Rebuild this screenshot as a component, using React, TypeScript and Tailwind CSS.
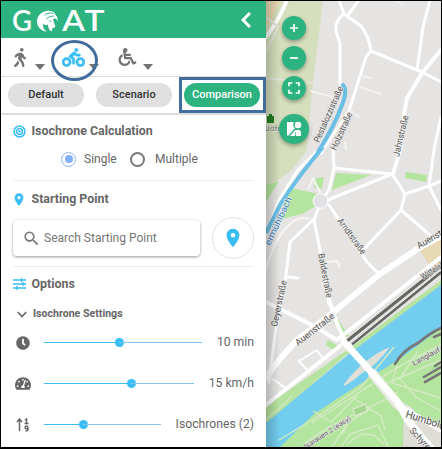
import React from "react";
import { FaBiking, FaWalking, FaWheelchair, FaClock, FaTachometerAlt } from "react-icons/fa";
import { MdPlace, MdSearch, MdFullscreen } from "react-icons/md";

function Road({ d, w = 3, c = "#fff" }: { d: string; w?: number; c?: string }) {
  return <path d={d} fill="none" stroke={c} strokeWidth={w} strokeLinejoin="round" strokeLinecap="round" />;
}

function Label({ x, y, r, len, children, size = 9, fill = "#555" }: {
  x: number; y: number; r: number; len: number; children: string; size?: number; fill?: string;
}) {
  return (
    <text transform={`translate(${x} ${y}) rotate(${r})`} textLength={len} lengthAdjust="spacingAndGlyphs"
      fontSize={size} fill={fill} stroke="#f0f0ee" strokeWidth="1" strokeLinejoin="round" paintOrder="stroke">
      {children}
    </text>
  );
}

function CityMap() {
  return (
    <svg className="block h-full w-full" viewBox="266 1 175 446" preserveAspectRatio="none">
      <defs>
        <linearGradient id="shade" x1="0" x2="1">
          <stop offset="0" stopColor="#000" stopOpacity=".2" />
          <stop offset="1" stopColor="#000" stopOpacity="0" />
        </linearGradient>
      </defs>
      <rect x="266" y="0" width="176" height="449" fill="#e5e4e2" />
      <path d="M266 0H323L312 92L307 150L292 170L266 188Z" fill="#d5dfbd" />
      <path d="M266 0H281L266 29Z" fill="#ead8b4" />
      <path d="M266 185L279 181L266 202ZM287 187L318 194V205L302 214L281 219Z" fill="#b4e59f" />
      <path d="M316 178L324 177L322 189L314 187ZM336 173L371 175L332 190ZM406 172L427 175L426 182L405 178Z" fill="#b4e59f" />
      <path d="M441 236L418 248L430 266H441Z" fill="#e7d9b3" />
      <path d="M266 406L350 348L441 280V298L345 356L266 424Z" fill="#b7e3a0" />
      <path d="M441 326L405 354L342 391L306 413L272 449H441Z" fill="#b4e59f" />
      <path d="M266 423L350 353L441 285V328L401 358L338 398L314 414L278 449H266Z" fill="#72cdee" />
      <path d="M337 318L349 336L344 337L333 321ZM328 340L340 347L334 350L326 345Z" fill="#b4e59f" />
      <path d="M344 384Q365 357 390 347Q377 365 361 374Q352 382 344 386Z" fill="#dedfd7" />

      <Road w={4} d="M287 0Q279 20 266 37" />
      <Road w={2} c="#e3e5d9" d="M266 17L278 27L266 52M266 78L312 83" />
      <Road w={3} d="M339 0L344 14Q335 20 336 31L340 44V84" />
      <Road w={3} d="M344 14L361 26Q369 36 371 51L422 72L441 82" />
      <Road w={3} d="M371 51L366 57L349 111L321 153" />
      <Road w={3} d="M359 0L348 15M430 0L423 27L417 70" />
      <Road w={4} d="M441 50L422 73L407 98L404 115L400 150L393 174" />
      <Road w={2} c="#f3f2f0" d="M311 91L336 98M362 76L371 78M360 87L381 94M349 111L360 117M345 143L346 149M395 0L403 5" />
      <Road w={3} d="M441 117L434 150L429 186L405 194L392 174L334 168L333 148" />
      <Road w={3} d="M334 168L329 190L322 200M392 174L330 199L319 207L314 220L320 250L329 305" />
      <Road w={3} d="M405 194L401 210L365 248M401 210L431 236M429 186L441 210M441 181L429 186" />
      <Road w={3} d="M329 205L367 262L379 274" />
      <Road w={3} d="M316 152L298 170L278 202L267 232M314 219L290 242L286 275L275 334L269 382M286 277L298 278" />
      <Road w={2} c="#f6f5f3" d="M309 219Q298 215 288 226Q274 239 266 270M327 262L337 261L340 267M309 188L313 178L320 192" />
      <Road w={6} d="M441 236L419 248L380 274L326 318L297 340L279 360L266 377" />
      <Road w={4} d="M266 302L314 326L337 340M329 299L336 321L345 341M337 340L356 325L441 257M340 346L266 405" />
      <Road w={2} d="M299 361L317 350L323 359L308 371ZM273 379L287 389" />
      <circle cx="320.5" cy="201" r="7.3" fill="#e1e2e5" stroke="#fff" strokeWidth="1" />
      <path d="M318 152Q334 127 342 105Q348 91 343 85" fill="none" stroke="#6bbfe5" strokeWidth="4" strokeLinecap="round" />
      <path d="M266 233L281 203Q297 178 323 147" fill="none" stroke="#6bbfe5" strokeWidth="4" />

      <path d="M347 341L441 266M352 344L441 272" stroke="#666663" strokeWidth="3" />
      <path d="M350 344L441 270" stroke="#f5f5f3" strokeWidth="1" />
      <Road w={2.6} c="#777" d="M395 364Q403 350 418 343Q430 333 441 328M424 377L441 367M425 382L441 373M435 366L441 362M434 337L441 334" />
      <g fill="none" stroke="#d4eac5" strokeWidth="1.4">
        <path d="M312 423Q353 397 378 380T441 345M305 443Q330 425 351 416T398 392M331 449L349 421M279 440L317 417L361 387L394 347M313 411L331 422L357 396M352 397L381 416L385 430M397 365L392 383L441 398M418 351L400 379L416 397L441 411M378 387L441 360M266 420L284 404L292 396M343 434L348 423L370 409M340 449L350 434L378 425L389 449" />
        <path d="M353 409L366 404L367 411L355 416Z" fill="#a4d690" />
        <path d="M347 444L361 434L374 435L384 444" />
      </g>
      <path d="M404 410L441 432V449H403Z" fill="#deddd6" />
      <Road w={10} c="#e8e8e5" d="M373 374L397 404L410 413" />
      <Road w={7} d="M344 342L365 365L397 401L407 419L425 441L432 449" />
      <Road w={5} d="M401 407L441 430" />

      <g fontFamily="Roboto, sans-serif">
        <Label x={319} y={143} r={-66} len={60}>Pestalozzistraße</Label>
        <Label x={336} y={151} r={-66} len={41}>Holzstraße</Label>
        <Label x={399} y={157} r={-77} len={42}>Jahnstraße</Label>
        <Label x={337} y={221} r={54} len={42}>Arndtstraße</Label>
        <Label x={318} y={254} r={79} len={45}>Baldestraße</Label>
        <Label x={277} y={327} r={-78} len={47}>Geyerstraße</Label>
        <Label x={298} y={346} r={-38} len={47}>Auenstraße</Label>
        <Label x={419} y={249} r={-31} len={45}>Auenstraße</Label>
        <Label x={423} y={280} r={-32} len={45}>Wittelsbacher</Label>
        <Label x={270} y={246} r={-65} len={52} fill="#397fc1">ermühlbach</Label>
        <Label x={414} y={366} r={-29} len={52} size={7.5}>Langlauf-Loipe</Label>
        <Label x={306} y={449} r={-33} len={54} size={7}>Isarauen 2 (easy)</Label>
        <Label x={405} y={417} r={18} len={58} size={10.5}>Humboldtstr.</Label>
        <Label x={409} y={431} r={47} len={56}>Schyrenstraße</Label>
        <Label x={265} y={131} r={0} len={22} size={7.5} fill="#708264">üdfrie</Label>
      </g>
      <path d="M267 116H269V114H272V116H274V123H267Z" fill="#237d23" />
      <rect x="266" y="1" width="14" height="447" fill="url(#shade)" />
    </svg>
  );
}

function GoatMark() {
  return (
    <svg className="h-[24px] w-[92px] overflow-visible" viewBox="0 0 92 24">
      <g fill="#fff" fontFamily="Lato, sans-serif" fontSize="29" fontWeight="600">
        <text x="-1" y="23" textLength="20" lengthAdjust="spacingAndGlyphs">G</text>
        <text x="49" y="23" textLength="23" lengthAdjust="spacingAndGlyphs">A</text>
        <text x="71.5" y="23" textLength="20" lengthAdjust="spacingAndGlyphs">T</text>
      </g>
      <path fill="#fff" d="M33.5 3C27.500 4 24 8.500 24 13.500C24 19 28.500 23.500 34 23.500C30.500 21.500 29.500 18.500 30.500 15.500C31.500 17.500 33.500 17.500 35 16.500C35 19.500 36 22 38.500 23.500L39.500 20C42 20.500 43 18.500 41.500 16L40 11.500C42.500 9.500 43.500 11 44.500 13.500C45.500 8.500 42.500 5.500 38 5.500C35 5.500 32.500 6.500 31 8.500C32 4.500 38 2.500 43 7C41 3 37 2.200 33.500 3Z" />
      <path d="M33 11.500Q36 7.500 41 8" fill="none" stroke="#2db380" strokeWidth=".9" />
      <circle cx="37.500" cy="13" r=".8" fill="#2db380" />
    </svg>
  );
}

function Caret() {
  return <span className="h-0 w-0 border-x-[5.5px] border-t-[6px] border-x-transparent border-t-[#737373]" />;
}

function Tune() {
  return (
    <svg className="h-[12px] w-[13px]" viewBox="0 0 13 12" fill="none" stroke="#38bdf5" strokeWidth="1.3">
      <path d="M0 2H13M0 6H13M0 10H13M8.5 0V4M10 4V8M4 8V12" />
    </svg>
  );
}

function Target() {
  return (
    <svg className="h-[13px] w-[13px]" viewBox="0 0 13 13" fill="none" stroke="#38bdf5" strokeWidth="1.5">
      <circle cx="6.5" cy="6.5" r="5.5" /><circle cx="6.5" cy="6.5" r="3" /><circle cx="6.5" cy="6.5" r=".6" />
    </svg>
  );
}

function SortOrder() {
  return (
    <svg className="h-[14px] w-[14px]" viewBox="0 0 14 14" fill="none" stroke="#666" strokeWidth="1.5">
      <path d="M3.5 13V1M1 4L3.5 1L6 4" />
      <path d="M9 2L10.5 1V5.5M8.5 5.5H12.5M12 10V11.5Q11.5 13 9.5 13" />
      <circle cx="10.5" cy="9.5" r="1.4" />
    </svg>
  );
}

function Heading({ icon, children }: { icon: React.ReactNode; children: string }) {
  return (
    <div className="flex h-5 items-center text-[12.4px] font-bold text-[#666]">
      <span className="flex w-[18.5px] shrink-0">{icon}</span>
      <span className="whitespace-nowrap">{children}</span>
    </div>
  );
}

function SliderRow({ icon, filled, rest, value }: { icon: React.ReactNode; filled: string; rest: string; value: string }) {
  return (
    <div className="flex h-[41px] items-center text-[12.2px] text-[#666]">
      <span className="flex w-[28px] shrink-0">{icon}</span>
      <span className={`h-px bg-[#38bdf5] ${filled}`} />
      <span className="-mx-[4.5px] h-[9px] w-[9px] rounded-full bg-[#38bdf5]" />
      <span className={`h-px bg-[#82c4f4] ${rest}`} />
      <span className="ml-auto whitespace-nowrap">{value}</span>
    </div>
  );
}

const roundButton = "flex items-center justify-center rounded-full bg-[#2db380] text-white shadow-[0_2px_4px_#0005]";

export default function App() {
  return (
    <div className="relative flex h-[449px] w-[442px] overflow-hidden border border-b-2 border-black bg-white font-[Roboto,sans-serif]">
      <aside className="flex w-[265px] shrink-0 flex-col bg-white">
        <header className="flex h-[37px] shrink-0 items-center justify-between bg-[#2db380] pl-3 pr-[15px]">
          <GoatMark />
          <svg className="h-4 w-[10px]" viewBox="0 0 10 16" fill="none" stroke="#fff" strokeWidth="3"><path d="M9 1L2 8L9 15" /></svg>
        </header>
        <nav className="flex h-[39px] shrink-0 items-center border-b border-[#ddd] pl-[9px] text-[#737373]">
          <FaWalking className="h-[19px] w-[20px]" />
          <span className="ml-[5px] mt-[19px] flex"><Caret /></span>
          <FaBiking className="ml-[17px] h-[19px] w-[23px] text-[#38bdf5]" strokeWidth={14} />
          <span className="ml-[4px] mt-[19px] flex"><Caret /></span>
          <FaWheelchair className="ml-[19px] h-[18px] w-[19px]" />
          <span className="ml-[6px] mt-[19px] flex"><Caret /></span>
        </nav>
        <div className="flex h-[38px] shrink-0 items-center gap-3 border-b-2 border-[#ddd] pl-[7px] text-[11px] font-medium text-[#333]">
          <span className="flex h-6 w-[76px] items-center justify-center rounded-full bg-[#e0e0e0]">Default</span>
          <span className="flex h-6 w-[76px] items-center justify-center rounded-full bg-[#e0e0e0]">Scenario</span>
          <span className="flex h-6 w-[76px] items-center justify-center rounded-full bg-[#2db380] text-white">Comparison</span>
        </div>
        <div className="flex flex-col pl-3 pr-[12px]">
          <section className="flex h-[66px] flex-col border-b border-[#eee] pt-[6px]">
            <Heading icon={<Target />}>Isochrone Calculation</Heading>
            <div className="mt-[9px] flex items-center pl-[48px] text-[12px] text-[#666]">
              <span className="flex h-[15px] w-[15px] items-center justify-center rounded-full border-[1.5px] border-[#8ab4f8]"><span className="h-2 w-2 rounded-full bg-[#82b1ff]" /></span>
              <span className="ml-2 w-[46px]">Single</span>
              <span className="h-[15px] w-[15px] rounded-full border-2 border-[#777]" />
              <span className="ml-[10px]">Multiple</span>
            </div>
          </section>
          <section className="flex h-[86px] flex-col border-b border-[#eee] pt-[8px]">
            <Heading icon={<MdPlace className="-ml-[2px] h-[15px] w-[16px] text-[#38bdf5]" />}>Starting Point</Heading>
            <div className="mt-[8px] flex items-center justify-between">
              <div className="flex h-[36px] w-[187px] items-center rounded bg-white pl-[9px] text-[12px] text-[#757575] shadow-[0_1px_3px_#0006]">
                <MdSearch className="mr-[3px] h-[19px] w-[19px]" />
                <span className="whitespace-nowrap">Search Starting Point</span>
              </div>
              <div className="flex h-[42px] w-[42px] shrink-0 items-center justify-center rounded-full border border-[#e2e2e2]"><MdPlace className="h-[22px] w-[22px] text-[#38bdf5]" /></div>
            </div>
          </section>
          <section className="flex flex-col pt-[7px]">
            <Heading icon={<Tune />}>Options</Heading>
            <div className="mt-[10px] flex h-5 items-center pl-[4px] text-[10.6px] font-bold text-[#666]">
              <svg className="mr-[6px] h-[7px] w-[10px]" viewBox="0 0 10 7" fill="none" stroke="#666" strokeWidth="1.7"><path d="M.7 1L5 5.5L9.3 1" /></svg>
              Isochrone Settings
            </div>
            <div className="-mt-[2px] flex flex-col pl-[3px]">
              <SliderRow icon={<FaClock className="h-[14px] w-[14px]" />} filled="w-[75px]" rest="w-[83px]" value="10 min" />
              <SliderRow icon={<FaTachometerAlt className="-ml-px h-[15px] w-[16px]" />} filled="w-[87px]" rest="w-[63px]" value="15 km/h" />
              <SliderRow icon={<SortOrder />} filled="w-[39px]" rest="w-[78px]" value="Isochrones (2)" />
            </div>
          </section>
        </div>
      </aside>
      <main className="relative min-w-0 flex-1">
        <CityMap />
        <div className="absolute left-[12px] top-[15px] flex w-[31px] flex-col items-center gap-[6px]">
          <div className={`${roundButton} h-6 w-6`}><svg className="h-2 w-2" viewBox="0 0 8 8" stroke="#fff" strokeWidth="1.7"><path d="M4 0V8M0 4H8" /></svg></div>
          <div className={`${roundButton} h-6 w-6`}><svg className="h-2 w-2" viewBox="0 0 8 8" stroke="#fff" strokeWidth="1.7"><path d="M0 4H8" /></svg></div>
          <div className={`${roundButton} h-6 w-6`}><MdFullscreen className="h-5 w-5" /></div>
          <div className={`${roundButton} mt-[8px] h-[30px] w-[30px]`}>
            <svg className="h-4 w-4" viewBox="0 0 16 16" fill="#fff"><path d="M1 1H8L7 3Q7 6 9 7L2 15Q1 15 1 13Z" /><circle cx="12" cy="4" r="3.3" /><path d="M4 15L9 9V15ZM9 9H13Q15 9 15 12V15H10Z" /></svg>
          </div>
        </div>
      </main>
      <div className="absolute left-[50px] top-[39px] h-[41px] w-[47px] rounded-[50%] border-[3px] border-[#416d9c]" />
      <div className="absolute left-[178px] top-[76px] h-[36px] w-[87px] border-[3px] border-[#416d9c]" />
    </div>
  );
}
